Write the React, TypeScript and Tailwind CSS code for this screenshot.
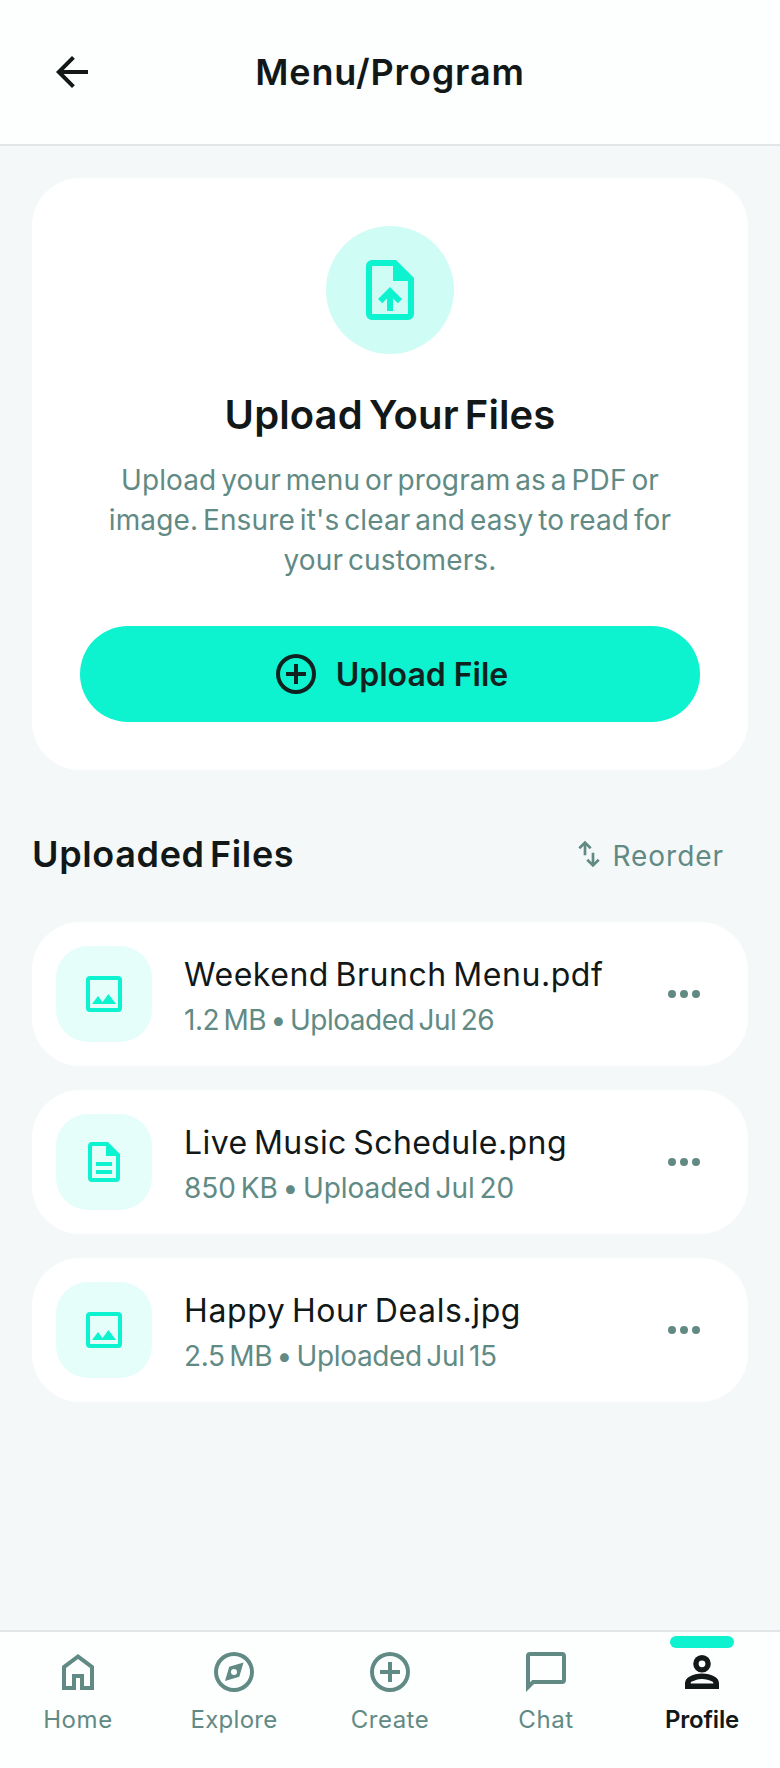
import type { ReactNode } from "react";

type IconProps = { d: string; className?: string; children?: ReactNode };

function Icon({ d, className = "size-12", children }: IconProps) {
  return (
    <svg viewBox="0 0 24 24" fill="currentColor" fillRule="evenodd" className={`shrink-0 ${className}`}>
      <path d={d} />
      {children}
    </svg>
  );
}

const ARROW_BACK = "M7.825 13l5.6 5.6L12 20l-8-8 8-8 1.425 1.4-5.6 5.6H20v2z";
const PAGE = "M6 22a2 2 0 0 1-2-2V4a2 2 0 0 1 2-2h8l6 6v12a2 2 0 0 1-2 2zM13 9V4H6v16h12V9z";
const UPLOAD_FILE = PAGE + "M11 19h2v-4.175l1.6 1.6L16 15l-4-4-4 4 1.425 1.4L11 14.825z";
const DESCRIPTION = PAGE + "M8 12h8v2H8zM8 16h8v2H8z";
const IMAGE =
  "M5 21a2 2 0 0 1-2-2V5a2 2 0 0 1 2-2h14a2 2 0 0 1 2 2v14a2 2 0 0 1-2 2zM5 19h14V5H5zM6 17h12l-3.75-5-3 4L9 13z";
const RING = "M12 22a10 10 0 1 1 0-20 10 10 0 0 1 0 20zM12 20a8 8 0 1 0 0-16 8 8 0 0 0 0 16z";
const ADD_CIRCLE = RING + "M11 17h2v-4h4v-2h-4V7h-2v4H7v2h4z";
const EXPLORE = RING + "M7.5 16.5l7.15-2.1 2.1-7.15-7.15 2.1zM12 13.5a1.5 1.5 0 1 1 0-3 1.5 1.5 0 0 1 0 3z";
const SWAP =
  "M8 13V5.825L5.425 8.4 4 7l5-5 5 5-1.425 1.4L10 5.825V13zM15 22l-5-5 1.425-1.4L14 18.175V11h2v7.175l2.575-2.575L20 17z";
const MORE =
  "M6 14a2 2 0 1 1 0-4 2 2 0 0 1 0 4zM12 14a2 2 0 1 1 0-4 2 2 0 0 1 0 4zM18 14a2 2 0 1 1 0-4 2 2 0 0 1 0 4z";
const HOME = "M6 19h3v-6h6v6h3v-9l-6-4.5L6 10zM4 21V9l8-6 8 6v12h-7v-6h-2v6z";
const CHAT = "M2 22V4a2 2 0 0 1 2-2h16a2 2 0 0 1 2 2v12a2 2 0 0 1-2 2H6zM5.15 16H20V4H4v13.125z";
const PERSON =
  "M3.5 20.45v-2.7q0-1.1.55-2t1.55-1.4q1.5-.85 3.1-1.25T12 12.7t3.3.4 3.1 1.25q1 .5 1.55 1.4t.55 2v2.7zM6.3 17.7h11.4q0-.5-.55-.9-1.2-.65-2.45-.95T12 15.5t-2.7.35-2.45.95q-.55.4-.55.9z";

const files = [
  { icon: IMAGE, name: "Weekend Brunch Menu.pdf", meta: "1.2 MB • Uploaded Jul 26", nameClass: "tracking-[0.54px]", metaClass: "tracking-[-0.5px]" },
  { icon: DESCRIPTION, name: "Live Music Schedule.png", meta: "850 KB • Uploaded Jul 20", nameClass: "tracking-[0.42px]", metaClass: "tracking-[-0.06px]" },
  { icon: IMAGE, name: "Happy Hour Deals.jpg", meta: "2.5 MB • Uploaded Jul 15", nameClass: "tracking-[0.6px]", metaClass: "tracking-[-0.36px]" },
];

const tabs = [
  { label: "Home", icon: HOME, labelClass: "tracking-[0.6px]" },
  { label: "Explore", icon: EXPLORE, labelClass: "tracking-[0.3px]" },
  { label: "Create", icon: ADD_CIRCLE, labelClass: "tracking-[0.5px]" },
  { label: "Chat", icon: CHAT, labelClass: "tracking-[0.6px]" },
];

export default function App() {
  return (
    <div className="flex h-[1768px] w-[780px] flex-col overflow-hidden bg-[#f5f8f8] font-['Inter','Liberation_Sans',sans-serif] text-[#111817]">
      <header className="flex h-[146px] shrink-0 items-center border-b-2 border-[#e2e6e8] bg-[#fdfefe] px-8">
        <button className="flex size-20 items-center justify-center">
          <Icon d={ARROW_BACK} />
        </button>
        <h1 className="flex-1 text-center text-[36px] leading-[44px] font-semibold tracking-[0.85px]">Menu/Program</h1>
        <div className="size-20" />
      </header>

      <main className="flex-1 px-8 pt-8">
        <section className="flex flex-col items-center rounded-[48px] bg-white p-12">
          <div className="flex size-32 items-center justify-center rounded-full bg-[#cffcf5] text-[#0df2cf]">
            <Icon d={UPLOAD_FILE} className="size-[72px]" />
          </div>
          <h2 className="mt-[31px] text-[40px] leading-[60px] font-semibold tracking-[0.1px] [word-spacing:-4px]">Upload Your Files</h2>
          <p className="mt-[15px] text-center text-[28px] leading-10 tracking-[0.12px] [word-spacing:-3.1px] text-[#618a84]">
            Upload your menu or program as a PDF or
            <br />
            image. Ensure it's clear and easy to read for
            <br />
            your customers.
          </p>
          <button className="mt-[46px] flex h-24 w-full items-center justify-center gap-4 rounded-full bg-[#0df2cf] text-[#10221f]">
            <Icon d={ADD_CIRCLE} />
            <span className="pt-0.5 text-[32px] leading-10 font-semibold">Upload File</span>
          </button>
        </section>

        <div className="mt-12 mb-8 flex h-[72px] items-center justify-between">
          <h2 className="text-[36px] leading-[44px] font-semibold tracking-[0.65px] [word-spacing:-4.5px]">Uploaded Files</h2>
          <button className="flex items-center gap-2 pr-6 text-[#618a84]">
            <Icon d={SWAP} className="size-8" />
            <span className="pt-[3px] text-[28px] leading-10 tracking-[0.95px]">Reorder</span>
          </button>
        </div>

        <ul className="flex flex-col gap-6">
          {files.map((f) => (
            <li key={f.name} className="flex h-36 items-center rounded-[48px] bg-white pr-10 pl-6">
              <div className="flex size-24 shrink-0 items-center justify-center rounded-[32px] bg-[#e5fefa] text-[#0df2cf]">
                <Icon d={f.icon} />
              </div>
              <div className="ml-8 h-24 flex-1 pt-[5px] whitespace-nowrap">
                <p className={`text-[32px] leading-[48px] [word-spacing:-3px] ${f.nameClass}`}>{f.name}</p>
                <p className={`mt-px text-[28px] leading-10 [word-spacing:-3px] text-[#618a84] ${f.metaClass}`}>{f.meta}</p>
              </div>
              <button className="text-[#618a84]">
                <Icon d={MORE} />
              </button>
            </li>
          ))}
        </ul>
      </main>

      <nav className="grid h-[138px] shrink-0 grid-cols-5 border-t-2 border-[#e2e6e8] bg-[#fdfefe] text-2xl leading-8">
        {tabs.map((t) => (
          <button key={t.label} className="flex flex-col items-center pt-4 text-[#618a84]">
            <Icon d={t.icon} />
            <span className={`mt-2 ${t.labelClass}`}>{t.label}</span>
          </button>
        ))}
        <button className="relative flex flex-col items-center pt-4">
          <span className="absolute top-1 left-1/2 h-3 w-16 -translate-x-1/2 rounded-full bg-[#0df2cf]" />
          <Icon d={PERSON}>
            <circle cx="12" cy="7.9" r="3.05" fill="none" stroke="currentColor" strokeWidth="2.7" />
          </Icon>
          <span className="mt-2 font-semibold tracking-[-0.2px]">Profile</span>
        </button>
      </nav>
    </div>
  );
}
